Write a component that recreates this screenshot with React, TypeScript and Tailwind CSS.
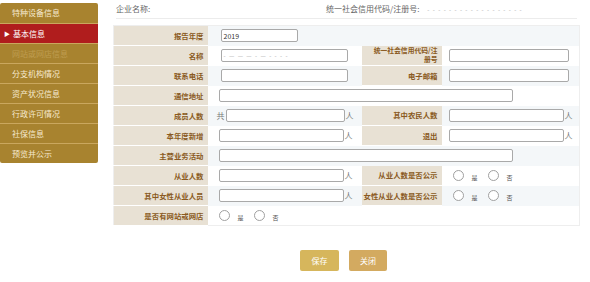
import React from 'react';

const FONT = { fontFamily: '"Noto Sans CJK SC", "Noto Sans", sans-serif' };

const MENU = [
  { label: '特种设备信息' },
  { label: '基本信息', active: true },
  { label: '网站或网店信息', disabled: true },
  { label: '分支机构情况' },
  { label: '资产状况信息' },
  { label: '行政许可情况' },
  { label: '社保信息' },
  { label: '预览并公示' },
];

function Sidebar() {
  return (
    <div className="mt-[3px] w-[98px] shrink-0 self-start overflow-hidden rounded-[2px] bg-[#a8832f]">
      {MENU.map((m, i) => (
        <div
          key={m.label}
          className={
            'flex h-[20px] items-center text-[8px] ' +
            (i > 0 ? 'border-t border-[#caa75e] ' : '') +
            (m.active ? 'bg-[#b01d1d] text-white' : m.disabled ? 'text-[#bf9d50]' : 'text-[#f6ead0]')
          }
        >
          {m.active ? (
            <span className="ml-[4px] mr-[3px] text-[6px] leading-none text-white">▶</span>
          ) : (
            <span className="w-[12px]" />
          )}
          {m.label}
        </div>
      ))}
    </div>
  );
}

function Box({ w, children }: { w: string; children?: React.ReactNode }) {
  return (
    <div className={'flex h-[13px] items-center overflow-hidden rounded-[2px] border border-[#a9a9a9] bg-white px-[2px] text-[7px] text-[#333] ' + w}>
      {children}
    </div>
  );
}

function Radio({ label }: { label: string }) {
  return (
    <span className="mr-[10px] flex items-center">
      <span className="h-[11px] w-[11px] rounded-full border border-[#a0a0a0] bg-white" />
      <span className="ml-[8px] mt-[3px] text-[6px] text-[#555]">{label}</span>
    </span>
  );
}

function Label({ children, tall }: { children: React.ReactNode; tall?: boolean }) {
  return (
    <td
      className={
        'overflow-hidden whitespace-nowrap border-b border-white bg-[#e8e1d4] pr-[4px] text-right font-bold text-[#8a5a22] ' +
        (tall ? 'text-[6.8px] leading-[9px]' : 'text-[7.4px] leading-[10px]')
      }
    >
      {children}
    </td>
  );
}

function Ren() {
  return <span className="ml-[1px] text-[8px] text-[#777]">人</span>;
}

export default function App() {
  const rowCls = (i: number) => (i % 2 === 0 ? 'h-[20px] bg-[#f4f7f9]' : 'h-[20px] bg-white');
  return (
    <div className="flex h-[282px] w-[590px] items-start bg-white" style={FONT}>
      <Sidebar />
      <div className="ml-[15px] w-[467px]">
        <div className="mx-[3px] flex h-[19px] items-center border-b border-[#ececec] text-[8px] text-[#666]">
          <span className="w-[210px]">企业名称:</span>
          <span>统一社会信用代码/注册号:</span>
          <span className="ml-[8px] tracking-[1px] text-[6px] text-[#aaa]">- - - - - - - - - - - - - - - - - -</span>
        </div>
        <table className="mt-[6px] w-full table-fixed border-collapse border border-[#eeeeee]">
          <colgroup>
            <col className="w-[94px]" />
            <col className="w-[154px]" />
            <col className="w-[80px]" />
            <col />
          </colgroup>
          <tbody>
            <tr className={rowCls(0)}>
              <Label>报告年度</Label>
              <td colSpan={3} className="pl-[13px]">
                <Box w="w-[77px]">2019</Box>
              </td>
            </tr>
            <tr className={rowCls(1)}>
              <Label>名称</Label>
              <td className="pl-[13px]">
                <Box w="w-[127px]">
                  <span className="tracking-[1px] text-[6px] text-[#aaa]">- — — — - — - - - -</span>
                </Box>
              </td>
              <Label tall>
                统一社会信用代码/注
                <br />
                册号
              </Label>
              <td className="pl-[7px]">
                <Box w="w-[120px]" />
              </td>
            </tr>
            <tr className={rowCls(2)}>
              <Label>联系电话</Label>
              <td className="pl-[13px]">
                <Box w="w-[127px]" />
              </td>
              <Label>电子邮箱</Label>
              <td className="pl-[7px]">
                <Box w="w-[120px]" />
              </td>
            </tr>
            <tr className={rowCls(3)}>
              <Label>通信地址</Label>
              <td colSpan={3} className="pl-[11px]">
                <Box w="w-[294px]" />
              </td>
            </tr>
            <tr className={rowCls(4)}>
              <Label>成员人数</Label>
              <td className="pl-[9px]">
                <div className="flex items-center">
                  <span className="mr-[1px] text-[8px] text-[#777]">共</span>
                  <Box w="w-[119px]" />
                  <Ren />
                </div>
              </td>
              <Label>其中农民人数</Label>
              <td className="pl-[7px]">
                <div className="flex items-center">
                  <Box w="w-[115px]" />
                  <Ren />
                </div>
              </td>
            </tr>
            <tr className={rowCls(5)}>
              <Label>本年度新增</Label>
              <td className="pl-[11px]">
                <div className="flex items-center">
                  <Box w="w-[125px]" />
                  <Ren />
                </div>
              </td>
              <Label>退出</Label>
              <td className="pl-[7px]">
                <div className="flex items-center">
                  <Box w="w-[115px]" />
                  <Ren />
                </div>
              </td>
            </tr>
            <tr className={rowCls(6)}>
              <Label>主营业务活动</Label>
              <td colSpan={3} className="pl-[11px]">
                <Box w="w-[294px]" />
              </td>
            </tr>
            <tr className={rowCls(7)}>
              <Label>从业人数</Label>
              <td className="pl-[11px]">
                <div className="flex items-center">
                  <Box w="w-[125px]" />
                  <Ren />
                </div>
              </td>
              <Label>从业人数是否公示</Label>
              <td className="pl-[11px]">
                <div className="flex items-center">
                  <Radio label="是" />
                  <Radio label="否" />
                </div>
              </td>
            </tr>
            <tr className={rowCls(8)}>
              <Label>其中女性从业人员</Label>
              <td className="pl-[11px]">
                <div className="flex items-center">
                  <Box w="w-[125px]" />
                  <Ren />
                </div>
              </td>
              <Label>女性从业人数是否公示</Label>
              <td className="pl-[11px]">
                <div className="flex items-center">
                  <Radio label="是" />
                  <Radio label="否" />
                </div>
              </td>
            </tr>
            <tr className={rowCls(9)}>
              <Label>是否有网站或网店</Label>
              <td colSpan={3} className="pl-[11px]">
                <div className="flex items-center">
                  <Radio label="是" />
                  <Radio label="否" />
                </div>
              </td>
            </tr>
          </tbody>
        </table>
        <div className="mt-[24px] flex justify-center gap-[10px] pr-[6px]">
          <button className="h-[21px] w-[39px] rounded-[2px] bg-[#d6b65c] text-[8px] text-white">保存</button>
          <button className="h-[21px] w-[38px] rounded-[2px] bg-[#d3aa60] text-[8px] text-white">关闭</button>
        </div>
      </div>
    </div>
  );
}
